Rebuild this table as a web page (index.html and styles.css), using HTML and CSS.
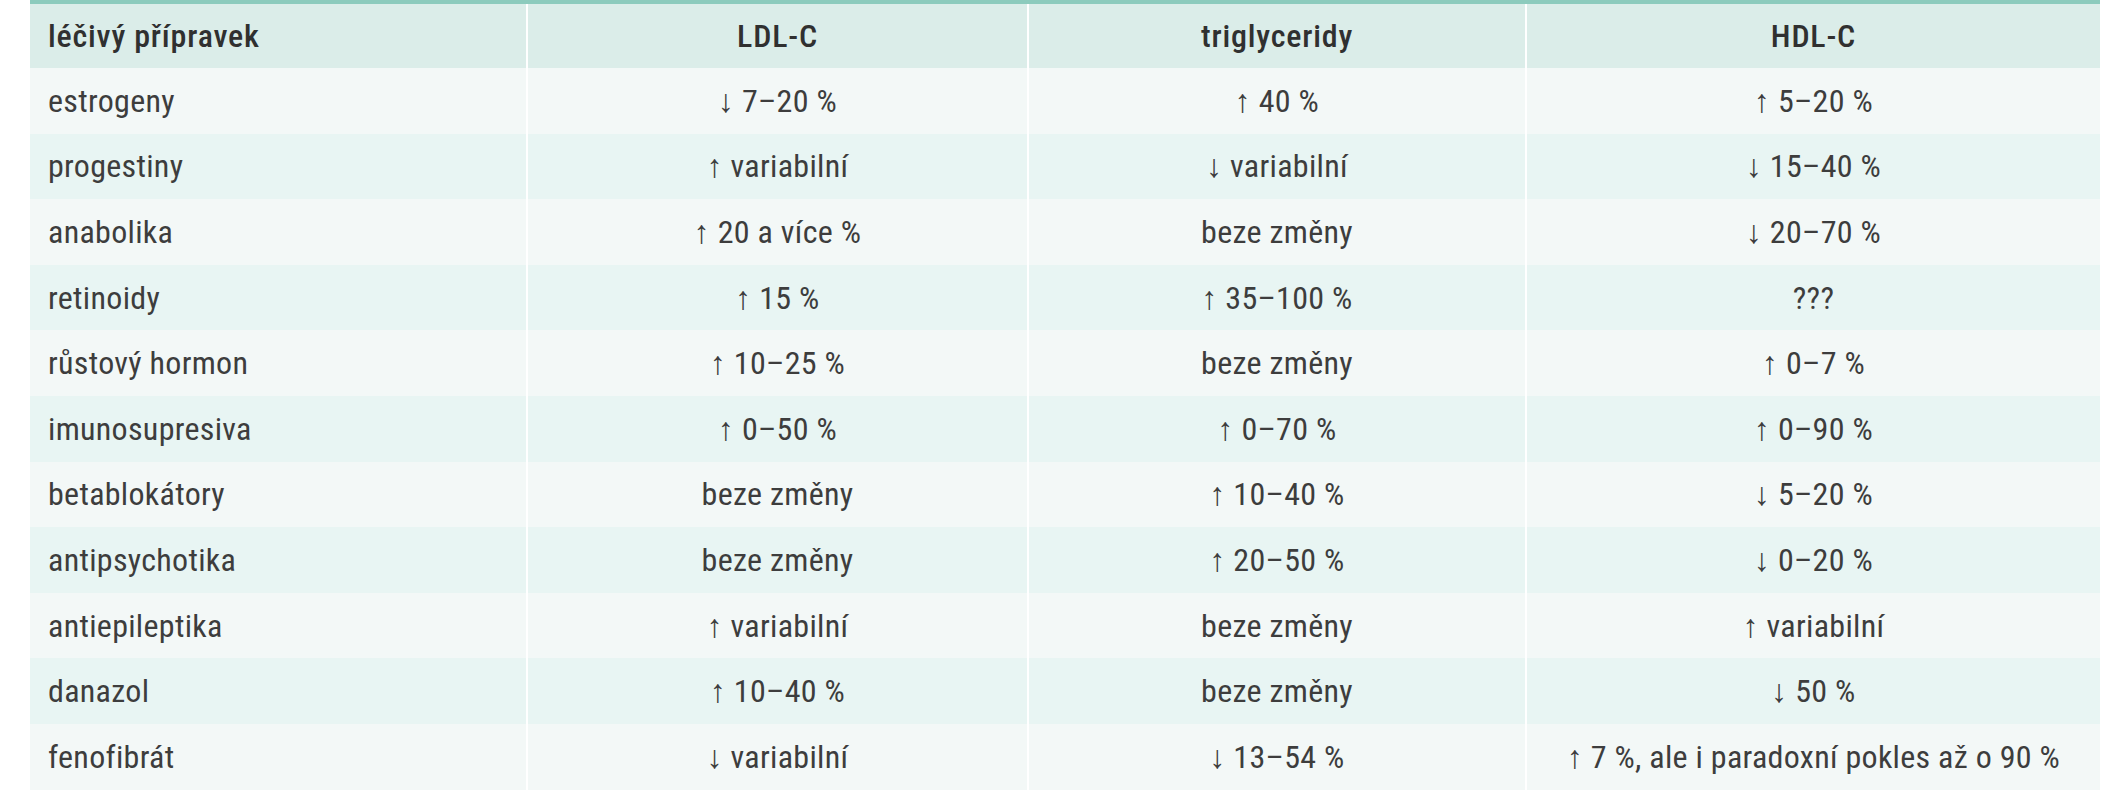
FILE: index.html
```html
<!DOCTYPE html>
<html lang="cs">
<head>
<meta charset="utf-8">
<title>Léčivé přípravky a lipidy</title>
<link rel="stylesheet" href="styles.css">
</head>
<body>
<table class="lipid-table">
  <colgroup>
    <col class="c1"><col class="c2"><col class="c3"><col class="c4">
  </colgroup>
  <thead>
    <tr>
      <th class="name">léčivý přípravek</th>
      <th>LDL-C</th>
      <th>triglyceridy</th>
      <th>HDL-C</th>
    </tr>
  </thead>
  <tbody>
    <tr><td class="name">estrogeny</td><td>↓ 7–20 %</td><td>↑ 40 %</td><td>↑ 5–20 %</td></tr>
    <tr><td class="name">progestiny</td><td>↑ variabilní</td><td>↓ variabilní</td><td>↓ 15–40 %</td></tr>
    <tr><td class="name">anabolika</td><td>↑ 20 a více %</td><td>beze změny</td><td>↓ 20–70 %</td></tr>
    <tr><td class="name">retinoidy</td><td>↑ 15 %</td><td>↑ 35–100 %</td><td>???</td></tr>
    <tr><td class="name">růstový hormon</td><td>↑ 10–25 %</td><td>beze změny</td><td>↑ 0–7 %</td></tr>
    <tr><td class="name">imunosupresiva</td><td>↑ 0–50 %</td><td>↑ 0–70 %</td><td>↑ 0–90 %</td></tr>
    <tr><td class="name">betablokátory</td><td>beze změny</td><td>↑ 10–40 %</td><td>↓ 5–20 %</td></tr>
    <tr><td class="name">antipsychotika</td><td>beze změny</td><td>↑ 20–50 %</td><td>↓ 0–20 %</td></tr>
    <tr><td class="name">antiepileptika</td><td>↑ variabilní</td><td>beze změny</td><td>↑ variabilní</td></tr>
    <tr><td class="name">danazol</td><td>↑ 10–40 %</td><td>beze změny</td><td>↓ 50 %</td></tr>
    <tr><td class="name">fenofibrát</td><td>↓ variabilní</td><td>↓ 13–54 %</td><td>↑ 7 %, ale i paradoxní pokles až o 90 %</td></tr>
  </tbody>
</table>
</body>
</html>
```
FILE: styles.css
```css
html, body {
  margin: 0;
  padding: 0;
  background: #ffffff;
}

body {
  padding-left: 30px;
  font-family: "Roboto Condensed", Roboto, "Liberation Sans", sans-serif;
  color: #3d3d3d;
}

.lipid-table {
  width: 2070px;
  table-layout: fixed;
  border-collapse: collapse;
  border-top: 4px solid #8ccbbd;
  font-size: 32px;
  letter-spacing: 0.3px;
}

.c1 { width: 497px; }
.c2 { width: 501px; }
.c3 { width: 498px; }
.c4 { width: 574px; }

.lipid-table th,
.lipid-table td {
  padding: 0 10px;
  text-align: center;
  vertical-align: middle;
  border-left: 2px solid #ffffff;
  white-space: nowrap;
}

.lipid-table th.name,
.lipid-table td.name {
  text-align: left;
  padding-left: 18px;
  border-left: none;
}

.lipid-table thead tr {
  height: 66px;
  background: #dbede9;
}

.lipid-table th {
  font-weight: 500;
  color: #303030;
  letter-spacing: 0.8px;
}

.lipid-table tbody tr {
  height: 65.6px;
}

.lipid-table tbody tr:nth-child(odd) {
  background: #f3f8f7;
}

.lipid-table tbody tr:nth-child(even) {
  background: #e8f5f3;
}
```
